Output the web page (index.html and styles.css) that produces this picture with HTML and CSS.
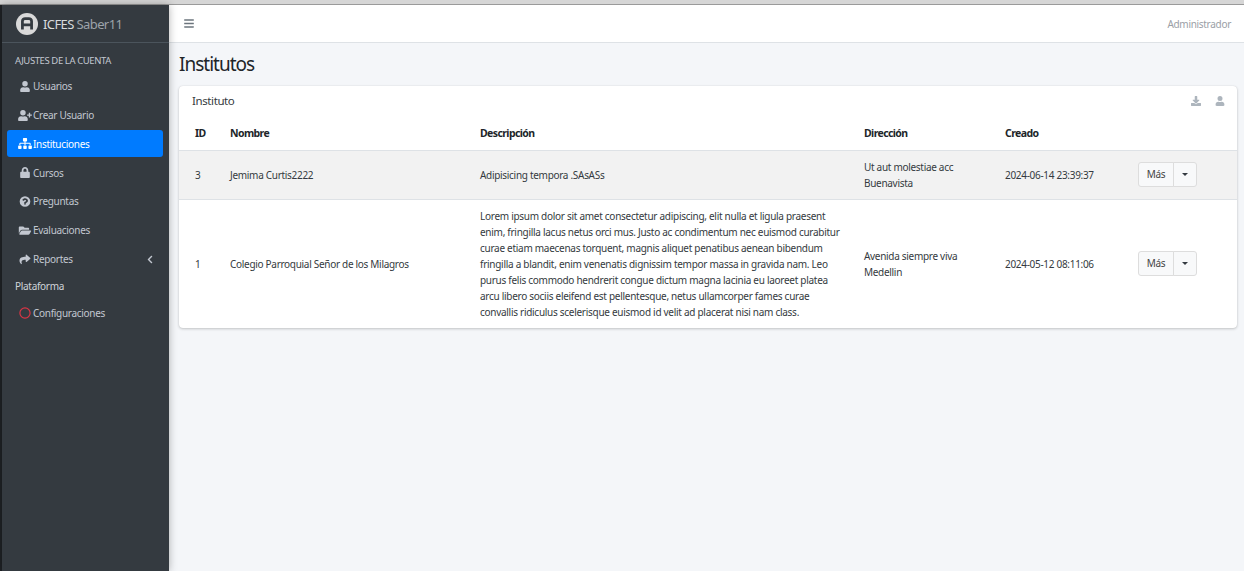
FILE: index.html
```html
<!DOCTYPE html>
<html lang="es">
<head>
<meta charset="utf-8">
<title>Institutos</title>
<link rel="stylesheet" href="styles.css">
</head>
<body>
<div class="topstrip"></div>
<div class="app">
  <div class="edge"></div>
  <aside class="sidebar">
    <div class="brand">
      <span class="logo"><svg viewBox="0 0 24 24" width="22" height="22"><circle cx="12" cy="12" r="12" fill="#d9d9d9"/><path d="M7 18V9a3 3 0 0 1 3-3h4a3 3 0 0 1 3 3v9M7 13h10" fill="none" stroke="#343a40" stroke-width="3"/></svg></span>
      <span class="brand-text">ICFES <span class="brand-light">Saber11</span></span>
    </div>
    <nav class="nav">
      <div class="nav-head">AJUSTES DE LA CUENTA</div>
      <a class="nav-item"><svg class="ic" viewBox="0 0 448 512"><path d="M224 256a128 128 0 1 0 0-256 128 128 0 0 0 0 256zm90 32h-17a174 174 0 0 1-146 0h-17C60 288 0 348 0 422v42c0 27 21 48 48 48h352c27 0 48-21 48-48v-42c0-74-60-134-134-134z"/></svg>Usuarios</a>
      <a class="nav-item"><svg class="ic" viewBox="0 0 640 512"><path d="M624 208h-64v-64c0-9-7-16-16-16h-32c-9 0-16 7-16 16v64h-64c-9 0-16 7-16 16v32c0 9 7 16 16 16h64v64c0 9 7 16 16 16h32c9 0 16-7 16-16v-64h64c9 0 16-7 16-16v-32c0-9-7-16-16-16zM224 256a128 128 0 1 0 0-256 128 128 0 0 0 0 256zm90 32h-17a174 174 0 0 1-146 0h-17C60 288 0 348 0 422v42c0 27 21 48 48 48h352c27 0 48-21 48-48v-42c0-74-60-134-134-134z"/></svg>Crear Usuario</a>
      <a class="nav-item active"><svg class="ic" viewBox="0 0 640 512"><path d="M128 352H32c-18 0-32 14-32 32v96c0 18 14 32 32 32h96c18 0 32-14 32-32v-96c0-18-14-32-32-32zm-24-80h192v48h48v-48h192v48h48v-57c0-21-17-39-39-39H344v-64h40c18 0 32-14 32-32V32c0-18-14-32-32-32H256c-18 0-32 14-32 32v96c0 18 14 32 32 32h40v64H95c-21 0-39 18-39 39v57h48v-48zm264 80h-96c-18 0-32 14-32 32v96c0 18 14 32 32 32h96c18 0 32-14 32-32v-96c0-18-14-32-32-32zm240 0h-96c-18 0-32 14-32 32v96c0 18 14 32 32 32h96c18 0 32-14 32-32v-96c0-18-14-32-32-32z"/></svg>Instituciones</a>
      <a class="nav-item"><svg class="ic" viewBox="0 0 448 512"><path d="M400 224h-24v-72C376 68 308 0 224 0S72 68 72 152v72H48c-26 0-48 22-48 48v192c0 26 22 48 48 48h352c26 0 48-22 48-48V272c0-26-22-48-48-48zm-104 0H152v-72c0-40 32-72 72-72s72 32 72 72v72z"/></svg>Cursos</a>
      <a class="nav-item"><svg class="ic" viewBox="0 0 512 512"><path fill-rule="evenodd" d="M256 8a248 248 0 1 0 0 496 248 248 0 0 0 0-496zm6 102c-58 0-95 24-124 68-4 6-3 13 3 17l40 30c6 4 14 3 18-2 19-24 32-38 61-38 22 0 49 14 49 35 0 16-13 24-35 36-25 14-58 32-58 76v6c0 7 5 12 12 12h64c7 0 12-5 12-12v-3c0-31 90-32 90-116 0-63-65-109-132-109zM256 336a38 38 0 1 0 0 76 38 38 0 0 0 0-76z"/></svg>Preguntas</a>
      <a class="nav-item"><svg class="ic" viewBox="0 0 576 512"><path d="M572 292l-72 124a64 64 0 0 1-55 32H45c-19 0-30-20-21-36l72-124a64 64 0 0 1 55-32h400c19 0 30 20 21 36zM152 224h328v-48c0-27-21-48-48-48H272l-64-64H48C21 64 0 85 0 112v278l69-119a112 112 0 0 1 83-47z"/></svg>Evaluaciones</a>
      <a class="nav-item"><svg class="ic" viewBox="0 0 512 512"><path d="M504 184 328 32c-15-13-40-3-40 18v80C128 132 0 164 0 316c0 61 39 121 83 153 13 10 33-2 28-18-45-144 21-182 177-185v88c0 21 25 31 40 18l176-152c11-10 11-26 0-36z"/></svg>Reportes<svg class="chev" viewBox="0 0 320 512"><path d="M34 239 228 45c9-9 25-9 34 0l23 23c9 9 9 24 0 34L131 256l154 154c9 10 9 25 0 34l-23 23c-9 9-25 9-34 0L34 273c-9-9-9-25 0-34z"/></svg></a>
      <div class="nav-label">Plataforma</div>
      <a class="nav-item"><svg class="ic ring" viewBox="0 0 16 16"><circle cx="8" cy="8" r="6.8"/></svg>Configuraciones</a>
    </nav>
  </aside>
  <div class="main">
    <header class="topbar">
      <svg class="burger" viewBox="0 0 448 512"><path d="M16 132h416c9 0 16-7 16-16V76c0-9-7-16-16-16H16C7 60 0 67 0 76v40c0 9 7 16 16 16zm0 160h416c9 0 16-7 16-16v-40c0-9-7-16-16-16H16c-9 0-16 7-16 16v40c0 9 7 16 16 16zm0 160h416c9 0 16-7 16-16v-40c0-9-7-16-16-16H16c-9 0-16 7-16 16v40c0 9 7 16 16 16z"/></svg>
      <span class="user">Administrador</span>
    </header>
    <main class="content">
      <h1 class="title">Institutos</h1>
      <section class="card">
        <div class="card-head">
          <span class="card-title">Instituto</span>
          <span class="tools">
            <svg class="tool" viewBox="0 0 512 512"><path d="M216 0h80c13 0 24 11 24 24v168h88c18 0 27 22 14 34L270 378c-7 8-21 8-28 0L90 226c-13-12-4-34 14-34h88V24c0-13 11-24 24-24zm296 376v112c0 13-11 24-24 24H24c-13 0-24-11-24-24V376c0-13 11-24 24-24h147l49 49c20 20 52 20 72 0l49-49h147c13 0 24 11 24 24z"/></svg>
            <svg class="tool" viewBox="0 0 448 512"><path d="M224 256a128 128 0 1 0 0-256 128 128 0 0 0 0 256zm90 32h-17a174 174 0 0 1-146 0h-17C60 288 0 348 0 422v42c0 27 21 48 48 48h352c27 0 48-21 48-48v-42c0-74-60-134-134-134z"/></svg>
          </span>
        </div>
        <table class="table">
          <colgroup><col class="c1"><col class="c2"><col class="c3"><col class="c4"><col class="c5"><col class="c6"></colgroup>
          <thead>
            <tr><th>ID</th><th>Nombre</th><th>Descripción</th><th>Dirección</th><th>Creado</th><th></th></tr>
          </thead>
          <tbody>
            <tr class="hover">
              <td>3</td><td>Jemima Curtis2222</td><td>Adipisicing tempora .SAsASs</td><td>Ut aut molestiae acc<br>Buenavista</td><td>2024-06-14 23:39:37</td>
              <td><span class="btn-group"><span class="btn">Más</span><span class="btn caret-btn"><span class="caret"></span></span></span></td>
            </tr>
            <tr>
              <td>1</td><td>Colegio Parroquial Señor de los Milagros</td>
              <td class="desc">Lorem ipsum dolor sit amet consectetur adipiscing, elit nulla et ligula praesent enim, fringilla lacus netus orci mus. Justo ac condimentum nec euismod curabitur curae etiam maecenas torquent, magnis aliquet penatibus aenean bibendum fringilla a blandit, enim venenatis dignissim tempor massa in gravida nam. Leo purus felis commodo hendrerit congue dictum magna lacinia eu laoreet platea arcu libero sociis eleifend est pellentesque, netus ullamcorper fames curae convallis ridiculus scelerisque euismod id velit ad placerat nisi nam class.</td>
              <td>Avenida siempre viva<br>Medellin</td><td>2024-05-12 08:11:06</td>
              <td><span class="btn-group"><span class="btn">Más</span><span class="btn caret-btn"><span class="caret"></span></span></span></td>
            </tr>
          </tbody>
        </table>
      </section>
    </main>
  </div>
</div>
</body>
</html>
```
FILE: styles.css
```css
* { box-sizing: border-box; }
html, body { height: 100%; }
body {
  margin: 0;
  overflow: hidden;
  font-family: "Noto Sans", "Open Sans", sans-serif;
  font-size: 10px;
  letter-spacing: -0.3px;
  color: #343a40;
  background: #f4f6f9;
  display: flex;
  flex-direction: column;
}
.topstrip { height: 5px; background: #d6d6d6; border-bottom: 1px solid #9a9a9a; flex: none; }
.app { flex: 1; display: flex; min-height: 0; }
.edge { width: 2px; background: #1f2226; flex: none; }
.sidebar {
  width: 167px;
  flex: none;
  background: #343a40;
  color: #c2c7d0;
  box-shadow: 0 0 8px rgba(0,0,0,.3);
  position: relative;
}
.brand {
  height: 38px;
  display: flex;
  align-items: center;
  padding-left: 14px;
  border-bottom: 1px solid #4b545c;
  gap: 5px;
}
.logo { display: flex; }
.brand-text { font-size: 13px; letter-spacing: -0.6px; color: #d8dadd; }
.brand-light { color: #9da3aa; }
.nav { padding: 0 6px 0 5px; }
.nav-head { height: 29.8px; padding-top: 12px; line-height: 12px; font-size: 9.5px; letter-spacing: -0.4px; padding-left: 8px; color: #c2c7d0; }
.nav-item {
  display: flex;
  align-items: center;
  height: 27px;
  margin-bottom: 1.8px;
  padding-left: 11px;
  border-radius: 3px;
  color: #c2c7d0;
}
.nav-item.active { background: #007bff; color: #fff; }
.ic { width: 14px; height: 11px; margin-right: 1px; fill: currentColor; flex: none; }
.ring { fill: none; stroke: #dc3545; stroke-width: 1.6; height: 12px; }
.chev { width: 8px; height: 9px; fill: currentColor; margin-left: auto; margin-right: 9px; }
.nav-label { height: 25px; line-height: 25px; padding-left: 8px; color: #d0d4da; }
.main { flex: 1; min-width: 0; display: flex; flex-direction: column; }
.topbar {
  height: 38px;
  background: #fff;
  border-bottom: 1px solid #dee2e6;
  display: flex;
  align-items: center;
  justify-content: space-between;
  padding: 0 13px 0 15px;
  flex: none;
}
.burger { width: 10px; height: 11px; fill: #6c757d; }
.user { color: #9aa0a6; }
.content { padding: 0 7px 0 10px; }
.title { margin: 0; height: 43px; line-height: 43px; font-size: 19px; letter-spacing: -1px; font-weight: 400; color: #212529; }
.card {
  background: #fff;
  border-radius: 4px;
  box-shadow: 0 0 1px rgba(0,0,0,.13), 0 1px 3px rgba(0,0,0,.2);
}
.card-head { height: 29px; display: flex; align-items: center; justify-content: space-between; padding: 0 12px 0 13px; }
.card-title { font-size: 11.5px; letter-spacing: -0.4px; color: #343a40; }
.tools { display: flex; gap: 14px; }
.tool { width: 10px; height: 10px; fill: #adb5bd; }
.table { width: 100%; border-collapse: collapse; table-layout: fixed; }
.c1 { width: 35px; }
.c2 { width: 250px; }
.c3 { width: 384px; }
.c4 { width: 141px; }
.c5 { width: 133px; }
.table th { text-align: left; font-size: 10.5px; letter-spacing: -0.6px; font-weight: 700; color: #212529; padding: 1px 16px 0; height: 35px; }
.table td { padding: 8px 16px; line-height: 16px; vertical-align: middle; border-top: 1px solid #dee2e6; }
.table td.desc { padding-right: 2px; letter-spacing: -0.28px; }
.table tr.hover td { background: #f2f2f2; }
.btn-group { display: flex; margin-top: -1px; }
.btn {
  height: 25px;
  width: 36px;
  justify-content: center;
  display: flex;
  align-items: center;
  background: #f8f9fa;
  border: 1px solid #ddd;
  border-radius: 3px 0 0 3px;
  color: #444;
}
.caret-btn { margin-left: -1px; width: 24px; border-radius: 0 3px 3px 0; }
.caret { border-style: solid; border-color: #343a40 transparent transparent; border-width: 3px 3.5px 0; width: 0; height: 0; display: block; }
```
